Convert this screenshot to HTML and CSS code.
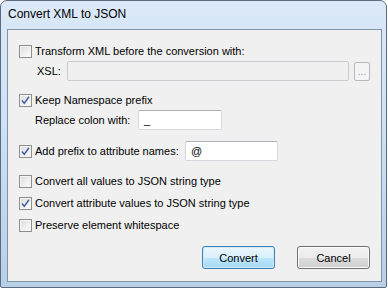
FILE: index.html
```html
<!DOCTYPE html>
<html lang="en">
<head>
    <meta charset="UTF-8">
    <meta name="viewport" content="width=device-width, initial-scale=1.0">
    <title>Convert XML to JSON</title>
    <link rel="stylesheet" href="styles.css">
</head>
<body>
    <div class="window">
        <div class="titlebar">Convert XML to JSON</div>
        <div class="client">
            <div class="row check-row first">
                <span class="checkbox"></span>
                <span class="text">Transform XML before the conversion with:</span>
            </div>
            <div class="row field-row xsl-row">
                <span class="label xsl-label">XSL:</span>
                <span class="input disabled xsl-input"></span>
                <span class="browse">...</span>
            </div>

            <div class="row check-row group">
                <span class="checkbox checked">
                    <svg viewBox="0 0 11 11" width="11" height="11"><path d="M2 5.5 L4.3 8.3 L9 1.8" fill="none" stroke="#4a62a0" stroke-width="1.5"/></svg>
                </span>
                <span class="text">Keep Namespace prefix</span>
            </div>
            <div class="row field-row colon-row">
                <span class="label colon-label">Replace colon with:</span>
                <span class="input colon-input">_</span>
            </div>

            <div class="row check-row prefix-row">
                <span class="checkbox checked">
                    <svg viewBox="0 0 11 11" width="11" height="11"><path d="M2 5.5 L4.3 8.3 L9 1.8" fill="none" stroke="#4a62a0" stroke-width="1.5"/></svg>
                </span>
                <span class="text prefix-label">Add prefix to attribute names:</span>
                <span class="input prefix-input">@</span>
            </div>

            <div class="row check-row option first-option">
                <span class="checkbox"></span>
                <span class="text">Convert all values to JSON string type</span>
            </div>
            <div class="row check-row option">
                <span class="checkbox checked">
                    <svg viewBox="0 0 11 11" width="11" height="11"><path d="M2 5.5 L4.3 8.3 L9 1.8" fill="none" stroke="#4a62a0" stroke-width="1.5"/></svg>
                </span>
                <span class="text">Convert attribute values to JSON string type</span>
            </div>
            <div class="row check-row option">
                <span class="checkbox"></span>
                <span class="text">Preserve element whitespace</span>
            </div>

            <div class="buttons">
                <button class="btn default">Convert</button>
                <button class="btn">Cancel</button>
            </div>
        </div>
    </div>
</body>
</html>
```

FILE: styles.css
```css
body {
    margin: 0;
    background: #ffffff;
    font-family: "Liberation Sans", Arial, sans-serif;
    font-size: 11px;
    color: #000000;
}

.window {
    width: 385px;
    height: 286px;
    border: 1px solid #5b6b7d;
    border-radius: 7px 7px 2px 2px;
    background: linear-gradient(180deg, #dbe9f8 0%, #cfe2f6 40%, #b8cfe8 100%);
    display: flex;
    flex-direction: column;
}

.titlebar {
    height: 28px;
    line-height: 27px;
    padding-left: 7px;
    font-size: 12px;
}

.client {
    box-sizing: border-box;
    width: 375px;
    height: 253px;
    margin-left: 6px;
    border: 1px solid #8393a6;
    background: #f0f0f0;
    display: flex;
    flex-direction: column;
    padding: 0 11px;
}

.row {
    display: flex;
    align-items: center;
}

.check-row {
    height: 16px;
}

.field-row {
    height: 20px;
    margin-top: 2px;
}

.first {
    margin-top: 13px;
}

.group {
    margin-top: 11px;
}

.prefix-row {
    height: 20px;
    margin-top: 11px;
}

.option {
    margin-top: 6px;
}

.option.first-option {
    margin-top: 12px;
}

.checkbox {
    flex: none;
    width: 11px;
    height: 11px;
    border: 1px solid #8e8f8f;
    background: linear-gradient(135deg, #d8d9db 0%, #f1f1f1 60%, #fbfbfb 100%);
    box-shadow: inset 0 0 0 1px #f4f4f4;
    margin-right: 3px;
    display: flex;
}

.text {
    white-space: nowrap;
}

.label {
    flex: none;
    white-space: nowrap;
}

.xsl-label {
    width: 30px;
    margin-left: 18px;
}

.colon-label {
    width: 103px;
    margin-left: 16px;
}

.prefix-label {
    flex: none;
    width: 150px;
}

.input {
    flex: none;
    height: 18px;
    border: 1px solid #d4d8de;
    border-top-color: #aeb1b6;
    border-radius: 2px;
    background: #ffffff;
    line-height: 18px;
    padding-left: 5px;
}

.xsl-input {
    width: 275px;
}

.input.disabled {
    background: #f0f0f0;
    border-color: #c9ccd1;
}

.colon-input {
    width: 77px;
}

.prefix-input {
    width: 86px;
}

.browse {
    flex: none;
    width: 14px;
    height: 17px;
    margin-left: 5px;
    border: 1px solid #b5b8bc;
    border-radius: 2px;
    background: #f4f4f4;
    color: #8d9aab;
    font-size: 10px;
    line-height: 17px;
    text-align: center;
}

.buttons {
    display: flex;
    justify-content: flex-end;
    gap: 22px;
    margin-top: 13px;
}

.btn {
    width: 73px;
    height: 23px;
    padding: 0;
    font-family: inherit;
    font-size: 11px;
    color: #000000;
    border: 1px solid #707070;
    border-radius: 3px;
    background: linear-gradient(180deg, #f2f2f2 0%, #ebebeb 50%, #dddddd 51%, #cfcfcf 100%);
    box-shadow: inset 0 0 0 1px #fbfbfb;
}

.btn.default {
    border-color: #3c7fb1;
    background: linear-gradient(180deg, #eaf6fd 0%, #d9f0fc 50%, #bee6fd 51%, #a7d9f5 100%);
    box-shadow: inset 0 0 0 1px #cfeaf9;
}
```
